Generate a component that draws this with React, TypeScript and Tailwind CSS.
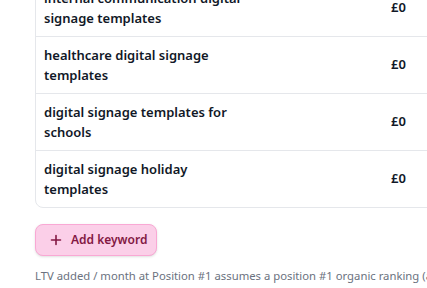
import React from "react";

const rows = [
  "internal communication digital signage templates",
  "healthcare digital signage templates",
  "digital signage templates for schools",
  "digital signage holiday templates",
];

export default function App() {
  return (
    <div
      className="w-[427px] h-[288px] overflow-hidden bg-white"
      style={{ fontFamily: '"Noto Sans", "Open Sans", sans-serif' }}
    >
      <div className="-mt-[22px] pl-[35px]">
        <div className="w-[420px] border border-[#e5e7eb] rounded-lg bg-white">
          {rows.map((r, i) => (
            <div
              key={r}
              className={`flex items-center h-[57px] pl-[8px] ${i > 0 ? "border-t border-[#e5e7eb]" : ""}`}
            >
              <div className="w-[202px] shrink-0 text-[13px] leading-[20px] font-semibold text-[#111827]">
                {r}
              </div>
              <div className="ml-[145px] text-[13px] font-semibold text-[#111827]">£0</div>
            </div>
          ))}
        </div>
        <button className="mt-[16px] flex items-center gap-[9px] h-[32px] w-[122px] pl-[14px] rounded-lg bg-[#fbcfe8] border border-[#f9a8d4] shadow-sm text-[#831843] text-[12px] font-semibold">
          <svg width="12" height="12" viewBox="0 0 12 12" fill="none" stroke="currentColor" strokeWidth="1.6" strokeLinecap="round">
            <path d="M6 1.5v9M1.5 6h9" />
          </svg>
          Add keyword
        </button>
        <p className="mt-[12px] whitespace-nowrap text-[11.3px] text-[#6b7280]">
          LTV added / month at Position #1 assumes a position #1 organic ranking (and a 3% conversion rate)
        </p>
      </div>
    </div>
  );
}
